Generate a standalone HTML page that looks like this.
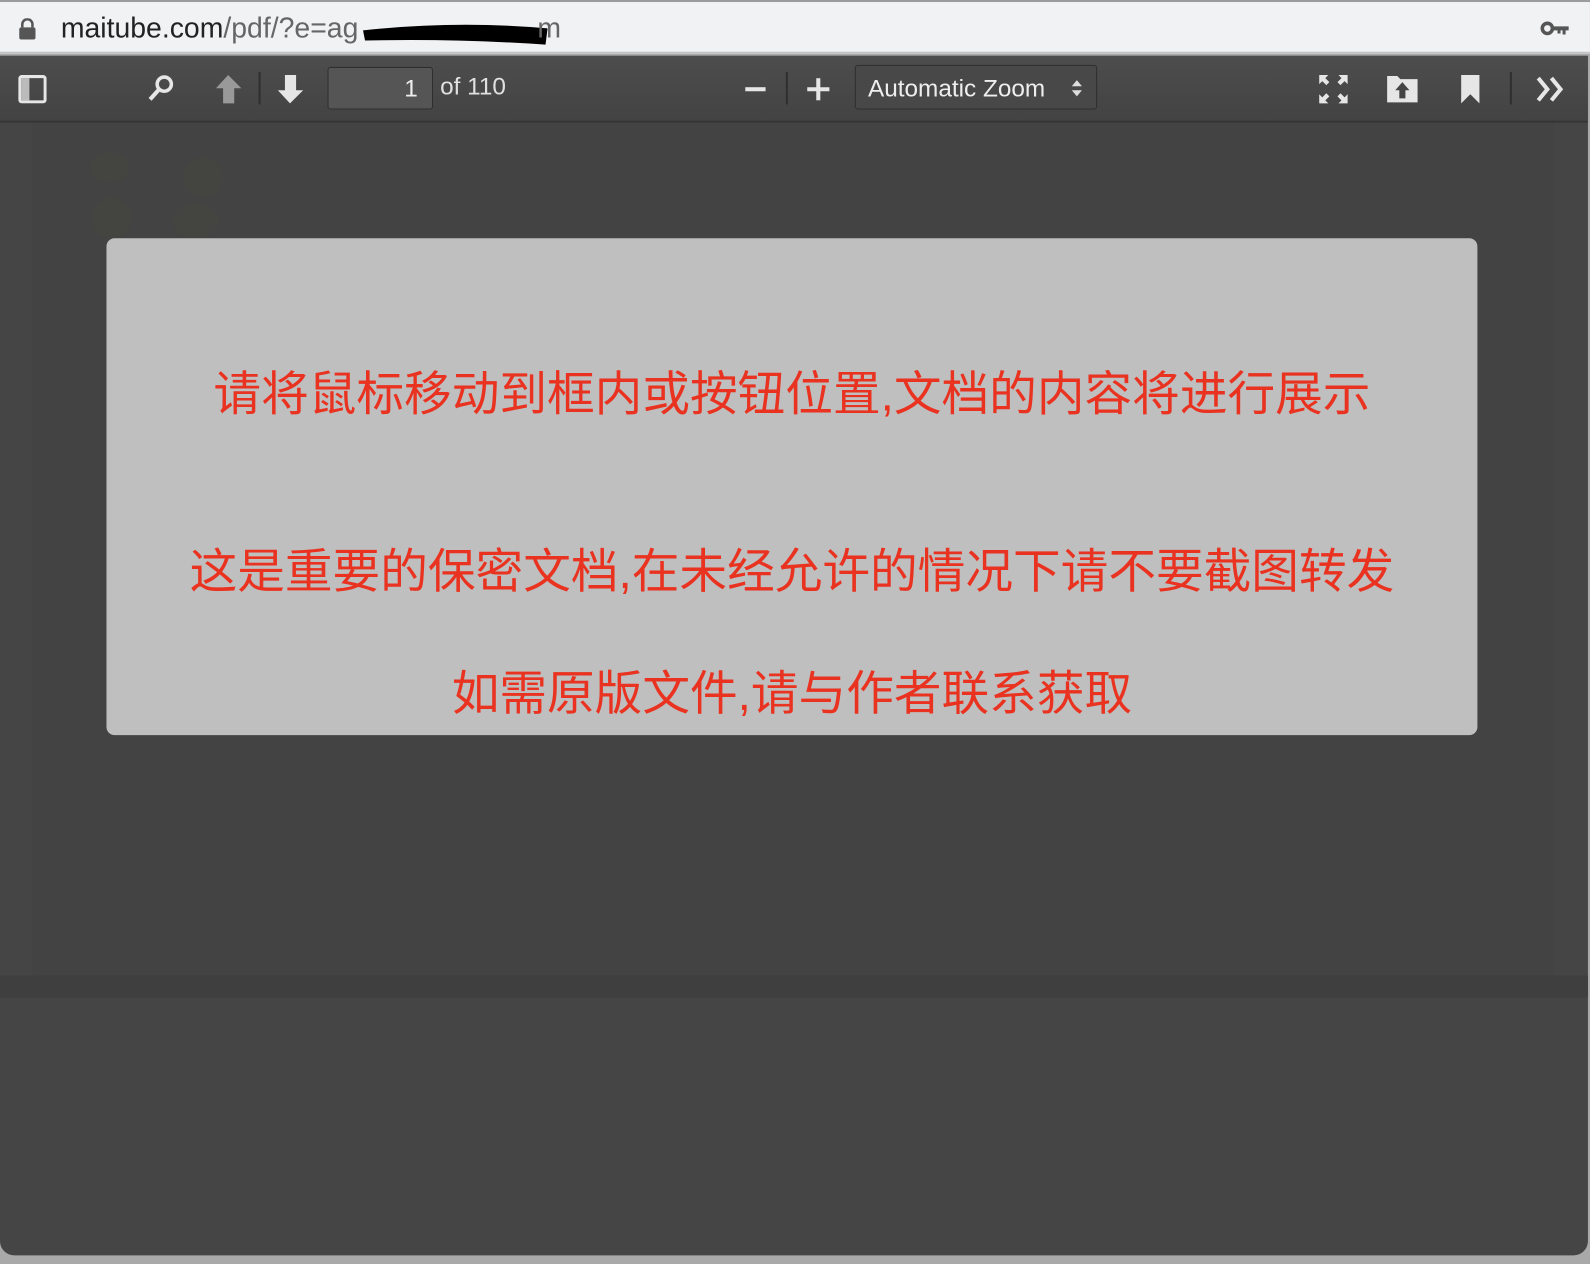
<!DOCTYPE html>
<html><head><meta charset="utf-8"><style>
*{margin:0;padding:0;box-sizing:border-box}
body{width:1590px;height:1264px;overflow:hidden;background:#a9a9a9;font-family:"Liberation Sans","Noto Sans CJK SC",sans-serif;position:relative}
#root{position:absolute;left:0;top:0;width:1568px;height:1247px;transform:scale(1.014);transform-origin:0 0}
.url{position:absolute;left:0;top:0;width:1568px;height:53px;background:#f1f2f4;border-top:2px solid #9c9c9c;border-bottom:2px solid #c4c4c4}
.url .t{position:absolute;left:60px;top:10px;font-size:28px;color:#222}
.url .t span{color:#666}
.win{position:absolute;left:0;top:55px;width:1566px;height:1183px;background:#454545;border-radius:0 0 14px 14px;overflow:hidden}
.tb{position:absolute;left:0;top:0;width:100%;height:66px;background:linear-gradient(#4d4d4d,#434343);border-bottom:2px solid #353535}
.ic{position:absolute;fill:#e6e6e6}
.pg{position:absolute;left:323px;top:11px;width:104px;height:42px;border:1px solid #2e2e2e;border-radius:3px;background:#555;color:#eee;font-size:24px;text-align:right;padding:7px 14px 0 0}
.of{position:absolute;left:434px;top:17px;color:#e0e0e0;font-size:24px}
.zm{position:absolute;left:843px;top:9px;width:239px;height:44px;border:1px solid #2e2e2e;border-radius:3px;background:#484848;color:#eee;font-size:24px;padding:9px 0 0 12px}
.sep{position:absolute;top:16px;width:2px;height:32px;background:#2f2f2f}
.dlg{position:absolute;left:105px;top:235px;width:1352px;height:490px;background:#bfbfbf;border-radius:8px;color:#e9321f;font-size:47px;text-align:center}
.dlg div{position:absolute;left:0;width:100%;line-height:56px}
.leaf{position:absolute;border-radius:50%;background:#464640}
</style></head><body><div id="root">
<div class="url">
<svg style="position:absolute;left:18px;top:16px" width="18" height="22" viewBox="0 0 18 22"><path d="M4 9V6a5 5 0 0 1 10 0v3" stroke="#555" stroke-width="2.5" fill="none"/><rect x="1" y="9" width="16" height="12" rx="2" fill="#555"/></svg>
<div class="t">maitube.com<span>/pdf/?e=ag</span></div>
<svg style="position:absolute;left:350px;top:14px" width="200" height="30"><path d="M8 14 Q100 4 190 12 L188 28 Q100 22 10 24Z" fill="#000"/></svg>
<div class="t" style="left:530px"><span>m</span></div>
<svg style="position:absolute;left:1519px;top:18px" width="30" height="16"><circle cx="7" cy="8" r="5" stroke="#555" stroke-width="3.5" fill="none"/><path d="M12 6h16v4h-3v4h-3v-4h-2v3h-3v-3h-5z" fill="#555"/></svg>
</div>
<div class="win">
<div class="leaf" style="left:88px;top:95px;width:40px;height:30px"></div>
<div class="leaf" style="left:180px;top:100px;width:40px;height:40px"></div>
<div class="leaf" style="left:90px;top:140px;width:40px;height:40px"></div>
<div class="leaf" style="left:170px;top:145px;width:45px;height:35px"></div>
<div style="position:absolute;left:32px;top:65px;width:1500px;height:842px;background:rgba(60,60,68,.15)"></div>
<div style="position:absolute;left:0;top:907px;width:1568px;height:22px;background:#3f3f3f"></div>
<div class="tb">
<svg class="ic" style="left:18px;top:19px" width="28" height="28"><rect x="1.5" y="1.5" width="25" height="25" rx="2" stroke="#e6e6e6" stroke-width="3" fill="none"/><rect x="3" y="3" width="8" height="22" fill="#bbb"/></svg>
<svg class="ic" style="left:145px;top:18px" width="28" height="28"><circle cx="17" cy="10" r="7" stroke="#e6e6e6" stroke-width="3.5" fill="none"/><path d="M12 15 3 25" stroke="#e6e6e6" stroke-width="4"/></svg>
<svg class="ic" style="left:211px;top:18px" width="28" height="30"><path d="M14 1 2 14h7v15h11V14h7z" fill="#999"/></svg>
<div class="sep" style="left:255px"></div>
<svg class="ic" style="left:272px;top:18px" width="28" height="30"><path d="M14 29 2 16h7V1h11v15h7z"/></svg>
<div class="pg">1</div><div class="of">of 110</div>
<div style="position:absolute;left:735px;top:31px;width:20px;height:4px;background:#e6e6e6"></div>
<div class="sep" style="left:775px"></div>
<svg class="ic" style="left:796px;top:22px" width="22" height="22"><path d="M9 0h4v22H9zM0 9h22v4H0z"/></svg>
<div class="zm">Automatic Zoom<svg style="position:absolute;right:14px;top:14px" width="10" height="16"><path d="M5 0 10 6H0zM5 16 0 10h10z" fill="#ddd"/></svg></div>
<svg class="ic" style="left:1300px;top:18px" width="30" height="30"><path d="M1 1h9L7 4l4 4-3 3-4-4-3 3zM29 1v9l-3-3-4 4-3-3 4-4-3-3zM1 29v-9l3 3 4-4 3 3-4 4 3 3zM29 29h-9l3-3-4-4 3-3 4 4 3-3z"/></svg>
<svg class="ic" style="left:1367px;top:17px" width="32" height="30"><path d="M1 3h10l3 3h17v23H1z"/><path d="M16 9 9 17h4v8h6v-8h4z" fill="#444"/></svg>
<svg class="ic" style="left:1440px;top:18px" width="20" height="30"><path d="M1 1h18v28l-9-9-9 9z"/></svg>
<div class="sep" style="left:1489px"></div>
<svg class="ic" style="left:1515px;top:20px" width="32" height="26"><path d="M2 2 11 13 2 24M15 2 24 13 15 24" stroke="#e6e6e6" stroke-width="4" fill="none"/></svg>
</div>
</div>
<div class="dlg">
<div style="top:126px">请将鼠标移动到框内或按钮位置,文档的内容将进行展示</div>
<div style="top:301px">这是重要的保密文档,在未经允许的情况下请不要截图转发</div>
<div style="top:421px">如需原版文件,请与作者联系获取</div>
</div>
</div></body></html>
